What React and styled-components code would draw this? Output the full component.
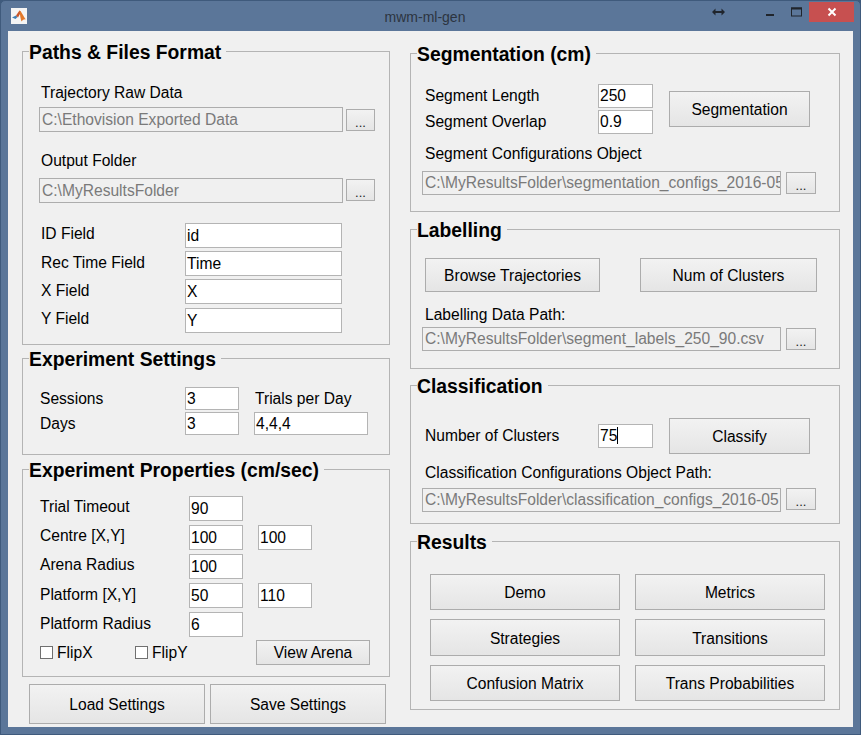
import React from "react";
import styled, { createGlobalStyle } from "styled-components";

const Global = createGlobalStyle`
  html, body { margin: 0; padding: 0; background: #3f5a7c; }
  * { box-sizing: border-box; }
`;

const Window = styled.div`
  width: 861px;
  height: 735px;
  background: #5b7699;
  border: 1px solid #3f5a7c;
  border-radius: 5px 5px 0 0;
  padding: 0 7px 7px;
  display: flex;
  flex-direction: column;
  font-family: "Liberation Sans", Arial, sans-serif;
  color: #000;
  overflow: hidden;
`;

const TitleBar = styled.div`
  height: 30px;
  flex: none;
  display: flex;
  align-items: center;
  position: relative;
`;

const AppTitle = styled.div`
  position: absolute;
  left: 0;
  right: 11px;
  top: 8px;
  text-align: center;
  font-size: 14px;
  line-height: 16px;
  color: #2c3440;
`;

const AppIcon = styled.div`
  width: 16px;
  height: 16px;
  margin: 0 0 0 3px;
  background: #f4f4f4;
  display: flex;
`;

const WinControls = styled.div`
  margin-left: auto;
  display: flex;
  align-items: flex-start;
  align-self: flex-start;
  height: 21px;
  margin-right: -1px;
`;

const WinIcon = styled.svg`
  display: block;
  flex: none;
  margin-top: 6px;
  margin-left: ${(p) => p.$ml || 0}px;
`;

const CloseBtn = styled.div`
  width: 45px;
  height: 20px;
  margin: 1px 0 0 7px;
  background: #c75050;
  display: flex;
  align-items: center;
  justify-content: center;
`;

const Client = styled.div`
  flex: 1;
  background: #f0f0f0;
  padding: 0 13px 0 14px;
  display: grid;
  grid-template-columns: 368px 430px;
  column-gap: 20px;
`;

const Column = styled.div`
  display: flex;
  flex-direction: column;
`;

const Panel = styled.section`
  height: ${(p) => p.$h}px;
  margin-top: ${(p) => p.$mt}px;
  border: 1px solid #b4b4b4;
  padding-left: ${(p) => p.$pl}px;
  flex: none;
`;

const PanelTitle = styled.h2`
  width: fit-content;
  height: 21px;
  margin: -10px 0 0 ${(p) => p.$ml}px;
  padding: 0 5px 0 0;
  background: #f0f0f0;
  font-size: 19.33px;
  line-height: 22px;
  font-weight: 700;
  white-space: nowrap;
`;

const Row = styled.div`
  display: flex;
  align-items: center;
  margin-top: ${(p) => p.$mt || 0}px;
  margin-left: ${(p) => p.$ml || 0}px;
  height: ${(p) => p.$h || 25}px;
`;

const Label = styled.div`
  font-size: 15.6px;
  line-height: 22px;
  white-space: nowrap;
  flex: none;
  width: ${(p) => (p.$w ? `${p.$w}px` : "auto")};
  margin-left: ${(p) => p.$ml || 0}px;
  margin-bottom: ${(p) => (p.$lift || 0) * 2}px;
`;

const Field = styled.div`
  width: ${(p) => p.$w}px;
  height: ${(p) => p.$h || 25}px;
  flex: none;
  margin-left: ${(p) => p.$ml || 0}px;
  padding: 0 ${(p) => (p.$off ? 2 : 1)}px;
  border: 1px solid ${(p) => (p.$off ? "#adadad" : "#b4b4b4")};
  background: ${(p) => (p.$off ? "#f0f0f0" : "#fff")};
  color: ${(p) => (p.$off ? "#7a7a7a" : "#000")};
  font-size: 15.6px;
  line-height: ${(p) => (p.$h || 25) - 2}px;
  white-space: nowrap;
  overflow: hidden;
`;

const Caret = styled.span`
  display: inline-block;
  width: 1px;
  height: 17px;
  background: #000;
  vertical-align: -3px;
`;

const Button = styled.div`
  width: ${(p) => (p.$w ? `${p.$w}px` : "auto")};
  height: ${(p) => (p.$h ? `${p.$h}px` : "auto")};
  flex: none;
  margin-left: ${(p) => p.$ml || 0}px;
  padding-top: 2px;
  border: 1px solid #acacac;
  background: linear-gradient(#f2f2f2, #e5e5e5);
  display: flex;
  align-items: center;
  justify-content: center;
  font-size: 15.6px;
  white-space: nowrap;
`;

const SmallButton = styled(Button)`
  padding-top: 0;
`;

const Dots = styled(SmallButton)`
  width: ${(p) => p.$w || 29}px;
  height: 22px;
  align-self: flex-start;
  margin-top: ${(p) => p.$mt || 0}px;
  align-items: flex-end;
  line-height: 14px;
  font-size: 13px;
  color: #222;
`;

const CheckBox = styled.div`
  width: 13px;
  height: 13px;
  flex: none;
  border: 1px solid #707070;
  background: #fff;
  margin-right: 4px;
`;

const SegLabels = styled.div`
  width: 173px;
  flex: none;
  display: flex;
  flex-direction: column;
  gap: 4px;
`;

const SegInputs = styled.div`
  width: 55px;
  flex: none;
  display: flex;
  flex-direction: column;
  gap: 2px;
`;

const ResultGrid = styled.div`
  display: grid;
  grid-template-columns: 190px 190px;
  grid-template-rows: 36px 37px 36px;
  column-gap: 15px;
  row-gap: 9px;
  margin: 21px 0 0 5px;
`;

const BottomBar = styled.div`
  display: flex;
  gap: 5px;
  margin: 7px 0 0 7px;
`;

const MatlabLogo = () => (
  <svg width="16" height="16" viewBox="0 0 16 16">
    <path d="M1 9.5 5 7.5 6.5 9 4.5 11Z" fill="#3f7fb5" />
    <path d="M5 7.5 8.5 2.5 10 4 7 9.5 6.5 9Z" fill="#c9562a" />
    <path d="M8.5 2.5C10.5 3 12 8 15 11.5 13 11 12 12 10.5 13.5 9.5 11 9 7 8.5 2.5Z" fill="#e2792b" />
  </svg>
);

const PathRow = ({ value, mt, dotsTop }) => (
  <Row $mt={mt}>
    <Field $w={304} $off>
      {value}
    </Field>
    <Dots $ml={3} $mt={dotsTop}>
      ...
    </Dots>
  </Row>
);

const ConfigRow = ({ value, mt, dotsTop }) => (
  <Row $mt={mt} $h={24} $ml={-3}>
    <Field $w={359} $h={24} $off>
      {value}
    </Field>
    <Dots $w={30} $ml={5} $mt={dotsTop}>
      ...
    </Dots>
  </Row>
);

const App = () => (
  <>
    <Global />
    <Window>
      <TitleBar>
        <AppIcon>
          <MatlabLogo />
        </AppIcon>
        <AppTitle>mwm-ml-gen</AppTitle>
        <WinControls>
          <WinIcon width="13" height="10" viewBox="0 0 13 10">
            <path d="M0 5 3.5 1.5V4H9.5V1.5L13 5 9.5 8.5V6H3.5V8.5Z" fill="#20252c" />
          </WinIcon>
          <WinIcon $ml={40} width="10" height="10" viewBox="0 0 10 10">
            <rect x="1" y="7" width="8" height="2" fill="#20252c" />
          </WinIcon>
          <WinIcon $ml={16} width="11" height="10" viewBox="0 0 11 10">
            <rect x="0.5" y="1" width="10" height="8" fill="none" stroke="#20252c" strokeWidth="1" />
            <rect x="0" y="0.5" width="11" height="2" fill="#20252c" />
          </WinIcon>
          <CloseBtn>
            <svg width="10" height="10" viewBox="0 0 10 10">
              <path d="M1.5 1.5 8.5 8.5M8.5 1.5 1.5 8.5" stroke="#fff" strokeWidth="2" />
            </svg>
          </CloseBtn>
        </WinControls>
      </TitleBar>
      <Client>
        <Column>
          <Panel $mt={20} $h={294} $pl={16}>
            <PanelTitle $ml={-10}>Paths &amp; Files Format</PanelTitle>
            <Row $mt={19} $h={22}>
              <Label $ml={2}>Trajectory Raw Data</Label>
            </Row>
            <PathRow value="C:\Ethovision Exported Data" mt={3} dotsTop={2} />
            <Row $mt={18} $h={22}>
              <Label $ml={2}>Output Folder</Label>
            </Row>
            <PathRow value="C:\MyResultsFolder" mt={6} dotsTop={1} />
            <Row $mt={20}>
              <Label $w={144} $ml={2} $lift={2}>ID Field</Label>
              <Field $w={157}>id</Field>
            </Row>
            <Row $mt={3}>
              <Label $w={144} $ml={2} $lift={1}>Rec Time Field</Label>
              <Field $w={157}>Time</Field>
            </Row>
            <Row $mt={3}>
              <Label $w={144} $ml={2} $lift={1}>X Field</Label>
              <Field $w={157}>X</Field>
            </Row>
            <Row $mt={4}>
              <Label $w={144} $ml={2} $lift={2}>Y Field</Label>
              <Field $w={157}>Y</Field>
            </Row>
          </Panel>

          <Panel $mt={13} $h={97} $pl={17}>
            <PanelTitle $ml={-11}>Experiment Settings</PanelTitle>
            <Row $mt={17} $h={23}>
              <Label $w={145}>Sessions</Label>
              <Field $w={54} $h={23}>3</Field>
              <Label $ml={16}>Trials per Day</Label>
            </Row>
            <Row $mt={2} $h={23}>
              <Label $w={145}>Days</Label>
              <Field $w={54} $h={23}>3</Field>
              <Field $w={114} $h={23} $ml={15}>4,4,4</Field>
            </Row>
          </Panel>

          <Panel $mt={14} $h={208} $pl={17}>
            <PanelTitle $ml={-11}>Experiment Properties (cm/sec)</PanelTitle>
            <Row $mt={15}>
              <Label $w={149} $lift={2}>Trial Timeout</Label>
              <Field $w={54}>90</Field>
            </Row>
            <Row $mt={4}>
              <Label $w={149} $lift={2}>Centre [X,Y]</Label>
              <Field $w={54}>100</Field>
              <Field $w={54} $ml={15}>100</Field>
            </Row>
            <Row $mt={4}>
              <Label $w={149} $lift={2}>Arena Radius</Label>
              <Field $w={54}>100</Field>
            </Row>
            <Row $mt={4}>
              <Label $w={149} $lift={1}>Platform [X,Y]</Label>
              <Field $w={54}>50</Field>
              <Field $w={54} $ml={15}>110</Field>
            </Row>
            <Row $mt={4}>
              <Label $w={149} $lift={1}>Platform Radius</Label>
              <Field $w={54}>6</Field>
            </Row>
            <Row $mt={3}>
              <CheckBox />
              <Label $w={78}>FlipX</Label>
              <CheckBox />
              <Label $w={104}>FlipY</Label>
              <SmallButton $w={114} $h={25}>View Arena</SmallButton>
            </Row>
          </Panel>

          <BottomBar>
            <Button $w={176} $h={40}>Load Settings</Button>
            <Button $w={176} $h={40}>Save Settings</Button>
          </BottomBar>
        </Column>

        <Column>
          <Panel $mt={22} $h={159} $pl={14}>
            <PanelTitle $ml={-8}>Segmentation (cm)</PanelTitle>
            <Row $mt={19} $h={50}>
              <SegLabels>
                <Label>Segment Length</Label>
                <Label>Segment Overlap</Label>
              </SegLabels>
              <SegInputs>
                <Field $w={55} $h={24}>250</Field>
                <Field $w={55} $h={24}>0.9</Field>
              </SegInputs>
              <Button $w={141} $h={36} $ml={16}>Segmentation</Button>
            </Row>
            <Row $mt={9} $h={22}>
              <Label>Segment Configurations Object</Label>
            </Row>
            <ConfigRow value="C:\MyResultsFolder\segmentation_configs_2016-05" mt={6} dotsTop={1} />
          </Panel>

          <Panel $mt={17} $h={140} $pl={14}>
            <PanelTitle $ml={-8}>Labelling</PanelTitle>
            <Row $mt={17} $h={34}>
              <Button $w={175} $h={34}>Browse Trajectories</Button>
              <Button $w={177} $h={34} $ml={40}>Num of Clusters</Button>
            </Row>
            <Row $mt={12} $h={22}>
              <Label>Labelling Data Path:</Label>
            </Row>
            <ConfigRow value="C:\MyResultsFolder\segment_labels_250_90.csv" mt={1} dotsTop={1} />
          </Panel>

          <Panel $mt={16} $h={139} $pl={14}>
            <PanelTitle $ml={-8}>Classification</PanelTitle>
            <Row $mt={21} $h={36}>
              <Label $w={173}>Number of Clusters</Label>
              <Field $w={55} $h={24}>75<Caret /></Field>
              <Button $w={141} $h={36} $ml={16}>Classify</Button>
            </Row>
            <Row $mt={8} $h={22}>
              <Label>Classification Configurations Object Path:</Label>
            </Row>
            <ConfigRow value="C:\MyResultsFolder\classification_configs_2016-05" mt={4} dotsTop={0} />
          </Panel>

          <Panel $mt={17} $h={169} $pl={14}>
            <PanelTitle $ml={-8}>Results</PanelTitle>
            <ResultGrid>
              <Button>Demo</Button>
              <Button>Metrics</Button>
              <Button>Strategies</Button>
              <Button>Transitions</Button>
              <Button>Confusion Matrix</Button>
              <Button>Trans Probabilities</Button>
            </ResultGrid>
          </Panel>
        </Column>
      </Client>
    </Window>
  </>
);

export default App;
